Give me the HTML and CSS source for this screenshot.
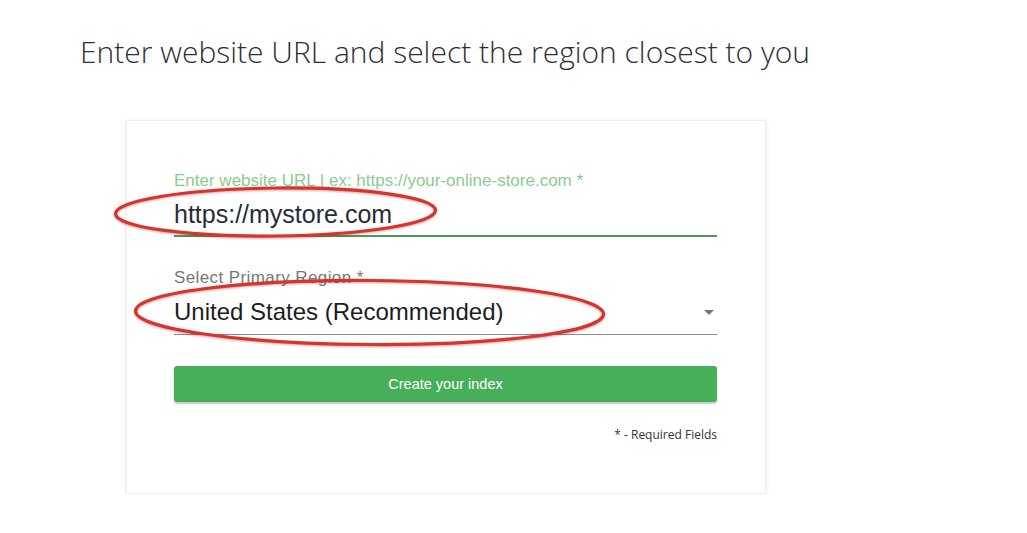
FILE: index.html
```html
<!DOCTYPE html>
<html lang="en">
<head>
<meta charset="utf-8">
<title>Create your index</title>
<link rel="stylesheet" href="styles.css">
</head>
<body>
<main class="page">
  <h1 class="title">Enter website URL and select the region closest to you</h1>
  <section class="card">
    <div class="field field-url">
      <label class="field-label label-green">Enter website URL | ex: https://your-online-store.com <span class="req">*</span></label>
      <div class="field-value value-url">https://mystore.com</div>
    </div>
    <div class="field field-select">
      <label class="field-label label-gray">Select Primary Region *</label>
      <div class="field-value value-select">
        <span>United States (Recommended)</span>
        <span class="caret"></span>
      </div>
    </div>
    <button class="btn" type="button">Create your index</button>
    <p class="note">* - Required Fields</p>

    <svg class="mark mark-one" viewBox="0 0 325 52" aria-hidden="true">
      <ellipse cx="162.5" cy="26" rx="160" ry="24" transform="rotate(-0.6 162.5 26)"/>
    </svg>
    <svg class="mark mark-two" viewBox="0 0 473 69" aria-hidden="true">
      <ellipse cx="236.5" cy="34.5" rx="234" ry="32" transform="rotate(0.4 236.5 34.5)"/>
    </svg>
  </section>
</main>
</body>
</html>
```
FILE: styles.css
```css
* { box-sizing: border-box; }

html, body {
  margin: 0;
  padding: 0;
  background: #ffffff;
}

.page {
  padding: 30px 0 0 80px;
  font-family: "Liberation Sans", Arial, sans-serif;
}

.title {
  margin: 0;
  font-family: "Open Sans", "Liberation Sans", sans-serif;
  font-weight: 300;
  font-size: 30px;
  line-height: 44px;
  color: #2e2f33;
  letter-spacing: 0;
}

.card {
  position: relative;
  width: 640px;
  margin: 46px 0 0 46px;
  padding: 50px 48px 50px 47px;
  background: #fff;
  border: 1px solid #f0f0f0;
  box-shadow: 0 1px 4px rgba(0, 0, 0, 0.10);
  display: flex;
  flex-direction: column;
}

.field {
  display: flex;
  flex-direction: column;
}

.field-label {
  display: block;
  font-size: 17px;
  line-height: 20px;
  white-space: nowrap;
}

.label-green {
  color: #8ccb90;
  letter-spacing: 0;
}

.label-green .req { color: #6cc0d0; }

.label-gray {
  color: #777;
  font-size: 17px;
  letter-spacing: 0.4px;
}

.field-value {
  font-size: 24px;
  line-height: 32px;
}

.field-url .field-value {
  margin-top: 7px;
  padding-bottom: 5px;
  border-bottom: 2px solid #4a9d57;
  color: #272c38;
  font-size: 25px;
}

.field-select {
  margin-top: 31px;
}

.value-select {
  margin-top: 8px;
  padding-bottom: 6px;
  border-bottom: 1px solid #8a8a8a;
  color: #1d1d1d;
  display: flex;
  align-items: center;
  justify-content: space-between;
}

.caret {
  width: 0;
  height: 0;
  margin-right: 3px;
  border-left: 5px solid transparent;
  border-right: 5px solid transparent;
  border-top: 5px solid #777;
}

.btn {
  margin-top: 31px;
  height: 36px;
  border: 0;
  border-radius: 3px;
  background: #47ae5a;
  color: #fff;
  font-family: "Liberation Sans", Arial, sans-serif;
  font-size: 14.5px;
  box-shadow: 0 2px 2px rgba(0, 0, 0, 0.22);
}

.note {
  margin: 25px 0 0;
  text-align: right;
  font-family: "Open Sans", "Liberation Sans", sans-serif;
  font-size: 12px;
  line-height: 16px;
  color: #333;
}

.mark {
  position: absolute;
  overflow: visible;
  filter: drop-shadow(0 1px 1px rgba(120, 0, 0, 0.35));
}

.mark ellipse {
  fill: none;
  stroke: #d8342b;
  stroke-width: 3.2;
}

.mark-one {
  left: -14px;
  top: 65px;
  width: 325px;
  height: 52px;
}

.mark-two {
  left: 6px;
  top: 157px;
  width: 473px;
  height: 69px;
}
```
